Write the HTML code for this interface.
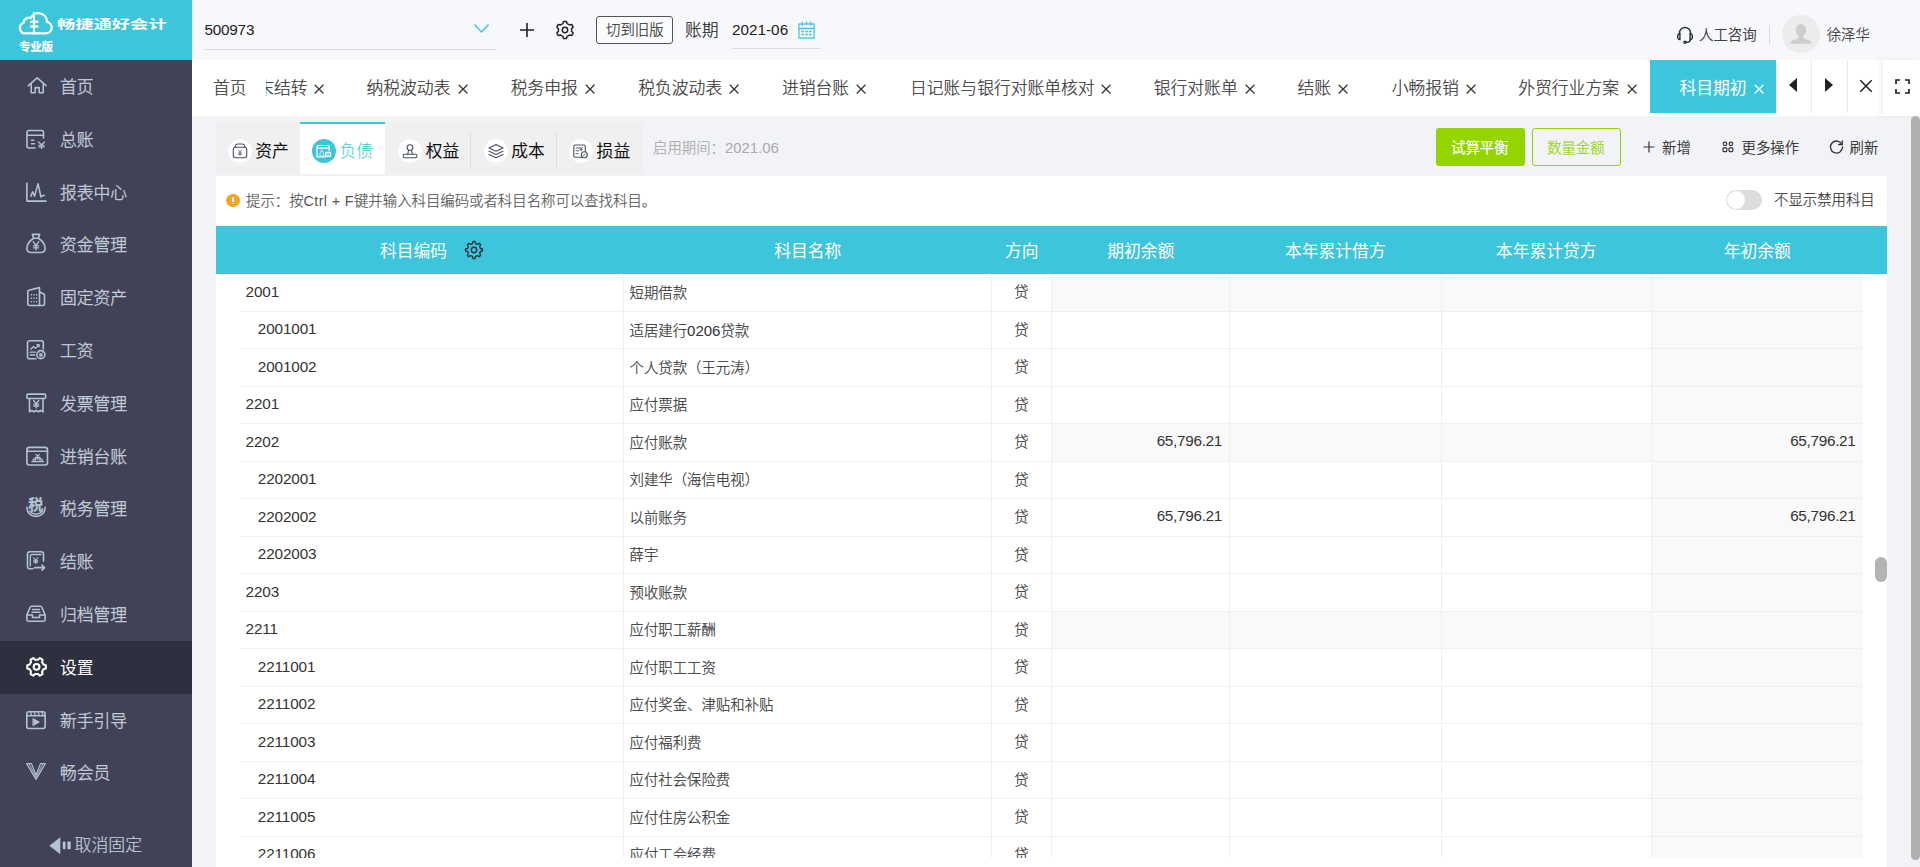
<!DOCTYPE html><html lang="zh-CN"><head><meta charset="utf-8"><title>科目期初</title><style>
*{box-sizing:border-box;margin:0;padding:0}
html,body{width:1920px;height:867px;overflow:hidden}
body{position:relative;background:#f2f3f6;font-family:"Liberation Sans", "Noto Sans CJK SC", sans-serif;color:#333;font-size:14.4px;font-weight:300}
.abs{position:absolute}
#top{position:absolute;left:192px;top:0;width:1728px;height:60px;background:#f7f8fc}
#logo{position:absolute;left:0;top:0;width:192px;height:60px;background:#3dc5dc}
#side{position:absolute;left:0;top:60px;width:192px;height:807px;background:#414257}
.nav{position:absolute;left:0;width:192px;height:52.8px;color:#c5cfdc;font-size:16.8px;line-height:56.6px;padding-left:60px;white-space:nowrap;-webkit-text-stroke:.35px}
.nav.on{background:#2e303f;color:#fff;font-weight:400;-webkit-text-stroke:0}
.nav svg{position:absolute;left:24px;top:13px;width:27px;height:27px;fill:none;stroke:#b4c3d3;stroke-width:1.6;stroke-linecap:round;stroke-linejoin:round}
.nav.on svg{stroke:#fff}
#tabs{position:absolute;left:192px;top:60px;width:1728px;height:55.5px;background:#fff}
.tab{position:absolute;top:60px;height:53px;line-height:54px;font-size:16.8px;color:#333;white-space:nowrap}
.tab i{position:absolute;top:0;font-style:normal}
.x{position:absolute;top:84.300px;width:10.200px;height:10.200px}
.x svg{display:block;width:100%;height:100%;stroke:#333;stroke-width:1.200;fill:none}
.t{position:absolute;white-space:nowrap;line-height:1;-webkit-text-stroke:.2px}
.n{-webkit-text-stroke:0}
</style></head><body>
<div id="logo">
<svg class="abs" style="left:16.200px;top:10px" width="37.500" height="25" viewBox="0 0 36 24" fill="none" stroke="#fff" stroke-width="2.2" stroke-linecap="round" stroke-linejoin="round"><path d="M9 22.5h19.5a5.6 5.6 0 0 0 1.2-11.1A8.2 8.2 0 0 0 14.2 7.6 5.2 5.2 0 0 0 7.3 12.2 5.3 5.3 0 0 0 9 22.5z"/><path d="M17.2 2.5v20" stroke-width="1.8"/><path d="M14.5 11.2h6M14.5 15.8h6" stroke-width="2.4"/></svg>
<div class="t n" style="left:56.800px;top:19.300px;font-size:12.200px;font-weight:700;color:#fff;transform:scaleX(1.500);transform-origin:0 0;letter-spacing:0">畅捷通好会计</div>
<div class="t" style="left:19px;top:42.2px;font-size:11.5px;font-weight:700;color:#fff;letter-spacing:-0.3px">专业版</div>
</div>
<div id="side"></div>
<div class="nav" style="top:60.0px"><svg viewBox="0 0 27 27"><path d="M4.3 12.7L13.2 4.8l8.9 7.9"/><path d="M7.200 11.200V19.800h4v-5.200h4v5.200h4V11.200"/></svg>首页</div>
<div class="nav" style="top:112.8px"><svg viewBox="0 0 27 27"><path d="M19.500 12V6.500a2 2 0 0 0-2-2H5a2 2 0 0 0-2 2V20a2 2 0 0 0 2 2h6"/><path d="M3 9.300h16.500"/><path d="M7.500 14.200h2.200M7.500 17.800h3"/><path d="M14.50 16.00L17.50 18.73L20.50 16.00M17.50 18.73V22.50M14.80 19.25H20.20M14.80 20.81H20.20" stroke-width="1.2"/></svg>总账</div>
<div class="nav" style="top:165.6px"><svg viewBox="0 0 27 27"><path d="M2.900 4.200V22.100H22"/><path d="M6.800 17.300l1.800-4.600 1.900 4.600L14.100 4.800l2.800 13.200 2-1.600h1.500" stroke-width="1.500"/></svg>报表中心</div>
<div class="nav" style="top:218.4px"><svg viewBox="0 0 27 27"><path d="M8.300 3.400h7.400l-1.400 3.800H9.700z"/><path d="M9.700 7.200C5 10 2.900 14 2.900 17.500c0 3 2.100 4 4.600 4h9c2.500 0 4.600-1 4.600-4 0-3.500-2.100-7.500-6.800-10.300"/><path d="M9.20 10.80L12.00 14.24L14.80 10.80M12.00 14.24V19.00M9.48 14.90H14.52M9.48 16.87H14.52" stroke-width="1.3"/></svg>资金管理</div>
<div class="nav" style="top:271.2px"><svg viewBox="0 0 27 27"><path d="M3.800 20V7.700a1.500 1.500 0 0 1 1-1.400l10.700-2.700v17.900H5.300A1.500 1.500 0 0 1 3.800 20z"/><path d="M15.500 8l4.300 2a1.200 1.200 0 0 1 .7 1.100V20a1.500 1.500 0 0 1-1.500 1.500h-3.500"/><path d="M6.800 10.800h1.300M9.400 10.800h1.300M12 10.800h1.300M6.800 14.200h1.300M9.400 14.200h1.300M12 14.200h1.300M6.800 17.600h1.300M9.400 17.600h1.300M12 17.600h1.300" stroke-width="1.400" stroke-linecap="butt"/></svg>固定资产</div>
<div class="nav" style="top:324.0px"><svg viewBox="0 0 27 27"><path d="M19.300 12V5.800a2 2 0 0 0-2-2H5.500a2 2 0 0 0-2 2v13.900a2 2 0 0 0 2 2H12"/><path d="M6.800 12.300l2.700-2.800 1.900 1.900 3.700-3.700M13 7.700h2.100v2.100" stroke-width="1.300"/><path d="M6.300 15.200h5M6.300 18h4.500" stroke-width="1.300"/><circle cx="16.900" cy="17.600" r="4"/><path d="M15.30 15.60L16.90 17.36L18.50 15.60M16.90 17.36V19.80M15.46 17.70H18.34M15.46 18.71H18.34" stroke-width="1"/></svg>工资</div>
<div class="nav" style="top:376.8px"><svg viewBox="0 0 27 27"><rect x="2.900" y="4.100" width="18.700" height="4.400" rx="1"/><path d="M5.500 8.500v13.300l2.250-1.300 2.250 1.300 2.250-1.300 2.250 1.300 2.250-1.300 2.250 1.300V8.500"/><path d="M9.65 10.50L12.25 13.61L14.85 10.50M12.25 13.61V17.90M9.91 14.20H14.59M9.91 15.98H14.59" stroke-width="1.3"/></svg>发票管理</div>
<div class="nav" style="top:429.6px"><svg viewBox="0 0 27 27"><rect x="2.900" y="4.400" width="20.600" height="17.600" rx="2.500"/><path d="M2.900 8.300h20.600"/><path d="M7.800 18.600h11.800M11.300 18.600v-4.300M16 18.600v-4.300M9.300 16h8.800M9.300 18.600v-2.600M18.100 18.600v-2.600M11.300 14.300h4.700M12 11.300l1.700 1.700 1.700-1.700M13.700 13v2.800" stroke-width="1.200"/></svg>进销台账</div>
<div class="nav" style="top:482.4px"><svg viewBox="0 0 27 27"><path d="M2.900 12.300C2.900 18 7 21.400 12 21.400s9.100-3.400 9.100-9.100"/><path d="M5.800 16.200c1.400 1.900 3.600 2.900 6.200 2.900s4.800-1 6.200-2.900" stroke-width="1.300"/></svg><span class="t" style="left:28.3px;top:14.200px;font-size:15px;font-weight:700;color:#b4c3d3">税</span>税务管理</div>
<div class="nav" style="top:535.2px"><svg viewBox="0 0 27 27"><path d="M19.500 13V6a2.300 2.300 0 0 0-2.300-2.300H5.800A2.300 2.300 0 0 0 3.500 6v12.500a2.300 2.300 0 0 0 2.300 2.300H9"/><path d="M6.300 18V8.500a2 2 0 0 1 2-2H17" stroke-width="1.300"/><path d="M9.50 9.80L11.70 12.24L13.90 9.80M11.70 12.24V15.60M9.72 12.70H13.68M9.72 14.09H13.68" stroke-width="1.1"/><path d="M10.500 19.600h10M18 17.100l2.500 2.500-2.500 2.500"/></svg>结账</div>
<div class="nav" style="top:588.0px"><svg viewBox="0 0 27 27"><path d="M2.900 14L6 6.500a1.800 1.800 0 0 1 1.700-1.200h8.600A1.800 1.800 0 0 1 18 6.500l3.100 7.500v4.500a1.800 1.800 0 0 1-1.800 1.800H4.700a1.800 1.800 0 0 1-1.800-1.800z"/><path d="M2.900 14h5.600v2.500h7V14h5.600"/><path d="M8.500 8.500h7M8 11.300h8" stroke-width="1.400"/></svg>归档管理</div>
<div class="nav on" style="top:640.8px"><svg viewBox="0 0 27 27"><path d="M19.47 10.52 L21.82 11.28 L21.82 14.42 L19.47 15.18 L18.03 17.68 L18.54 20.09 L15.83 21.66 L13.99 20.01 L11.11 20.01 L9.27 21.66 L6.56 20.09 L7.07 17.68 L5.63 15.18 L3.28 14.42 L3.28 11.28 L5.63 10.52 L7.07 8.02 L6.56 5.61 L9.27 4.04 L11.11 5.69 L13.99 5.69 L15.83 4.04 L18.54 5.61 L18.03 8.02Z" stroke-width="2.100"/><circle cx="12.550" cy="12.850" r="2.900" stroke-width="2.100"/></svg>设置</div>
<div class="nav" style="top:693.6px"><svg viewBox="0 0 27 27"><rect x="2.800" y="4.800" width="18.300" height="16.700" rx="2"/><path d="M2.800 8.800h18.300"/><path d="M6.500 5.200l1.300 3.200M10.300 5.200l1.300 3.200M14.100 5.200l1.300 3.200M17.900 5.200l1.300 3.200" stroke-width="1.200"/><path d="M9.300 11.700l6 3.400-6 3.400z" fill="#b4c3d3" stroke-width="1"/></svg>新手引导</div>
<div class="nav" style="top:746.4px"><svg viewBox="0 0 27 27"><path d="M2.700 4.600h4.800L12 16.200l4.500-11.600h4.800L12 20.400z" stroke-width="1.200"/><path d="M5.200 4.800L12 18.200 18.800 4.800" stroke-width=".9"/></svg>畅会员</div>
<div class="t" style="left:74.500px;top:838.300px;font-size:16.900px;color:#c5cfdc">取消固定</div>
<svg class="abs" style="left:48.200px;top:836.300px" width="25" height="20" viewBox="0 0 25 20"><path d="M1.300 9.700L12.300 1.200v17z" fill="#b4c3d3"/><rect x="14.800" y="5.600" width="2.700" height="7.700" rx=".7" fill="#b4c3d3"/><rect x="19.400" y="5.600" width="3.300" height="7.700" rx=".7" fill="#b4c3d3"/></svg>
<div id="top"></div>
<div class="t n" style="left:204.400px;top:22.100px;font-size:15.300px;letter-spacing:-.2px;color:#222">500973</div>
<div class="abs" style="left:204px;top:49px;width:292px;height:1px;background:#dcdde1"></div>
<svg class="abs" style="left:473px;top:23px" width="17" height="11" viewBox="0 0 17 11" fill="none" stroke="#3dc5dc" stroke-width="1.500"><path d="M1.500 1.500l7 7.500 7-7.500"/></svg>
<svg class="abs" style="left:519px;top:22px" width="16" height="16" viewBox="0 0 16 16" fill="none" stroke="#222" stroke-width="1.600"><path d="M8 1v14M1 8h14"/></svg>
<svg class="abs" style="left:554px;top:19px" width="22" height="22" viewBox="0 0 22 22" fill="none" stroke="#222" stroke-width="1.500" stroke-linejoin="round"><path d="M8.86 4.65 L9.55 2.42 L12.45 2.42 L13.14 4.65 L15.43 5.97 L17.70 5.45 L19.15 7.97 L17.57 9.68 L17.57 12.32 L19.15 14.03 L17.70 16.55 L15.43 16.03 L13.14 17.35 L12.45 19.58 L9.55 19.58 L8.86 17.35 L6.57 16.03 L4.30 16.55 L2.85 14.03 L4.43 12.32 L4.43 9.68 L2.85 7.97 L4.30 5.45 L6.57 5.97Z"/><circle cx="11" cy="11" r="2.700"/></svg>
<div class="abs" style="left:596px;top:16px;width:77px;height:28px;border:1px solid #555;border-radius:3px;background:#fafbfd"></div>
<div class="t" style="left:606px;top:22.500px;font-size:14.400px;color:#333">切到旧版</div>
<div class="t" style="left:685px;top:23.300px;font-size:16.800px;color:#222">账期</div>
<div class="t n" style="left:732px;top:21.900px;font-size:15.300px;color:#222">2021-06</div>
<div class="abs" style="left:731.500px;top:48px;width:89px;height:1px;background:#dcdde1"></div>
<svg class="abs" style="left:798px;top:21px" width="17" height="18" viewBox="0 0 18 18" preserveAspectRatio="none" fill="none" stroke="#3dc5dc" stroke-width="1.300"><rect x="1" y="3" width="16" height="14"/><path d="M1 7.500h16M4.500 .500v4.500M13.500 .500v4.500M9 .500v3"/><path d="M3.600 10.500h2.800M7.600 10.500h2.800M11.600 10.500h2.800M3.600 13.500h2.800M7.600 13.500h2.800M11.600 13.500h2.800" stroke-width="1.300"/></svg>
<svg class="abs" style="left:1675px;top:25px" width="20" height="20" viewBox="0 0 20 20" fill="none" stroke="#2a2e3a" stroke-width="1.400" stroke-linecap="round"><path d="M4.500 9V8a5.500 5.500 0 0 1 11 0v1"/><path d="M4.900 8.700a2.100 2.100 0 0 0-2.200 2.100v1.600a2.100 2.100 0 0 0 2.200 2.100zM15.100 8.700a2.100 2.100 0 0 1 2.200 2.100v1.600a2.100 2.100 0 0 1-2.200 2.100z"/><path d="M15.500 14.500c0 1.700-1.800 2.700-4.300 2.800"/><circle cx="10" cy="17.300" r="1.100"/></svg>
<div class="t" style="left:1699px;top:27.500px;font-size:14.400px;color:#222">人工咨询</div>
<div class="abs" style="left:1769px;top:25px;width:1px;height:19px;background:#d9dadf"></div>
<div class="abs" style="left:1782px;top:15px;width:38px;height:38px;border-radius:50%;background:#ececec;overflow:hidden"><svg width="38" height="38" viewBox="0 0 38 38"><ellipse cx="19" cy="15" rx="5.300" ry="5.900" fill="#cdcdcd"/><path d="M8.600 28.800c0-1.600.6-2.600 2.100-3.200l5.300-2.200c.7-.3.900-1 .7-1.800l-.5-2h5.600l-.5 2c-.2.800 0 1.500.7 1.800l5.300 2.200c1.500.6 2.100 1.600 2.100 3.200z" fill="#cdcdcd"/></svg></div>
<div class="t" style="left:1826.700px;top:27.600px;font-size:14.400px;color:#333">徐泽华</div>
<div id="tabs"></div>
<div class="abs" style="left:266.400px;top:60px;width:48.600px;height:53px;overflow:hidden"><div class="t" style="right:7.500px;top:21.200px;font-size:16.800px;color:#333">期末结转</div></div>
<div class="x" style="left:314px"><svg viewBox="0 0 10 10"><path d="M.7.7l8.600 8.600M9.300.7L.7 9.300"/></svg></div>
<div class="t" style="left:213.00px;top:81.200px;font-size:16.800px;color:#333">首页</div>
<div class="t" style="left:366.50px;top:81.200px;font-size:16.800px;color:#333">纳税波动表</div>
<div class="x" style="left:457.50px"><svg viewBox="0 0 10 10"><path d="M.7.7l8.600 8.600M9.300.7L.7 9.300"/></svg></div>
<div class="t" style="left:510.75px;top:81.200px;font-size:16.800px;color:#333">税务申报</div>
<div class="x" style="left:585.00px"><svg viewBox="0 0 10 10"><path d="M.7.7l8.600 8.600M9.300.7L.7 9.300"/></svg></div>
<div class="t" style="left:638.25px;top:81.200px;font-size:16.800px;color:#333">税负波动表</div>
<div class="x" style="left:729.00px"><svg viewBox="0 0 10 10"><path d="M.7.7l8.600 8.600M9.300.7L.7 9.300"/></svg></div>
<div class="t" style="left:782.00px;top:81.200px;font-size:16.800px;color:#333">进销台账</div>
<div class="x" style="left:855.75px"><svg viewBox="0 0 10 10"><path d="M.7.7l8.600 8.600M9.300.7L.7 9.300"/></svg></div>
<div class="t" style="left:910.00px;top:81.200px;font-size:16.800px;color:#333">日记账与银行对账单核对</div>
<div class="x" style="left:1100.75px"><svg viewBox="0 0 10 10"><path d="M.7.7l8.600 8.600M9.300.7L.7 9.300"/></svg></div>
<div class="t" style="left:1153.75px;top:81.200px;font-size:16.800px;color:#333">银行对账单</div>
<div class="x" style="left:1244.50px"><svg viewBox="0 0 10 10"><path d="M.7.7l8.600 8.600M9.300.7L.7 9.300"/></svg></div>
<div class="t" style="left:1297.50px;top:81.200px;font-size:16.800px;color:#333">结账</div>
<div class="x" style="left:1338.00px"><svg viewBox="0 0 10 10"><path d="M.7.7l8.600 8.600M9.300.7L.7 9.300"/></svg></div>
<div class="t" style="left:1391.75px;top:81.200px;font-size:16.800px;color:#333">小畅报销</div>
<div class="x" style="left:1465.50px"><svg viewBox="0 0 10 10"><path d="M.7.7l8.600 8.600M9.300.7L.7 9.300"/></svg></div>
<div class="t" style="left:1518.25px;top:81.200px;font-size:16.800px;color:#333">外贸行业方案</div>
<div class="x" style="left:1626.50px"><svg viewBox="0 0 10 10"><path d="M.7.7l8.600 8.600M9.300.7L.7 9.300"/></svg></div>
<div class="abs" style="left:1650px;top:60px;width:126px;height:53px;background:#3dc5dc"></div>
<div class="t n" style="left:1679.500px;top:81.200px;font-size:16.800px;font-weight:400;color:#fff">科目期初</div>
<div class="x" style="left:1753.700px"><svg viewBox="0 0 10 10" style="stroke:#fff"><path d="M.7.7l8.600 8.600M9.300.7L.7 9.300"/></svg></div>
<div class="abs" style="left:1776px;top:60px;width:107px;height:53px;background:#fff"></div>
<div class="abs" style="left:1811px;top:60px;width:1px;height:53px;background:#e9e9e9"></div>
<div class="abs" style="left:1847px;top:60px;width:1px;height:53px;background:#e9e9e9"></div>
<svg class="abs" style="left:1788px;top:77px" width="10" height="16" viewBox="0 0 10 16"><path d="M9 1v14L1 8z" fill="#222"/></svg>
<svg class="abs" style="left:1824px;top:77px" width="10" height="16" viewBox="0 0 10 16"><path d="M1 1v14l8-7z" fill="#222"/></svg>
<svg class="abs" style="left:1859px;top:79px" width="14" height="14" viewBox="0 0 14 14" fill="none" stroke="#222" stroke-width="1.500"><path d="M1.300 1.300l11.400 11.400M12.700 1.300L1.300 12.700"/></svg>
<div class="abs" style="left:1883px;top:60px;width:37px;height:55.500px;background:#fff;box-shadow:-3px 0 5px rgba(0,0,0,.06)"></div>
<svg class="abs" style="left:1895px;top:79px" width="15" height="15" viewBox="0 0 15 15" fill="none" stroke="#222" stroke-width="1.700"><path d="M1 5V1h4M10 1h4v4M14 10v4h-4M5 14H1v-4"/></svg>
<div class="abs" style="left:216px;top:122px;width:426px;height:52px;background:#f0f0f0"></div>
<div class="abs" style="left:300px;top:122px;width:84.500px;height:52px;background:#fff;border-top:2px solid #3dc5dc"></div>
<div class="abs" style="left:470px;top:132px;width:1px;height:36px;background:#dedede"></div>
<div class="abs" style="left:556px;top:132px;width:1px;height:36px;background:#dedede"></div>
<svg class="abs" style="left:227.9px;top:139.0px" width="24" height="24" viewBox="0 0 24 24"><circle cx="12" cy="12" r="11.8" fill="#fff"/><g fill="none" stroke="#4a5160" stroke-width="1.100" stroke-linecap="round" stroke-linejoin="round"><rect x="5.300" y="8.200" width="13.400" height="10.600" rx="2.200"/><path d="M7.200 8.200c0-2 1.200-3.200 2.800-3.200h4c1.600 0 2.800 1.200 2.800 3.200"/><path d="M10.700 11.700l1.300 1.600 1.300-1.600M12 13.300v2.600M10.600 14.100h2.800M10.600 15.300h2.800" stroke-width=".8"/></g></svg>
<svg class="abs" style="left:312.0px;top:139.0px" width="24" height="24" viewBox="0 0 24 24"><circle cx="12" cy="12" r="12" fill="#3dc5dc"/><g fill="none" stroke="#fff" stroke-width="1.200" stroke-linecap="round" stroke-linejoin="round"><path d="M17.200 11.500V7.800A1.300 1.300 0 0 0 15.900 6.500H6.300A1.300 1.300 0 0 0 5 7.800v9.700"/><path d="M5 9.200h12.200"/><path d="M9.800 11.300c-1.200 1.800-2 3.300-2 4.300 0 .9.800 1.500 2 1.500s2-.6 2-1.500c0-1-.8-2.500-2-4.300z" stroke-width=".9"/><rect x="13.600" y="13.300" width="5" height="4.200" rx="1" fill="#fff" fill-opacity=".35"/><path d="M4.500 17.800h9"/></g></svg>
<svg class="abs" style="left:397.7px;top:139.0px" width="24" height="24" viewBox="0 0 24 24"><circle cx="12" cy="12" r="11.8" fill="#fff"/><g fill="none" stroke="#4a5160" stroke-width="1.100" stroke-linecap="round" stroke-linejoin="round"><circle cx="12" cy="8.600" r="2.900"/><path d="M10.600 11.200l-.8 4M13.400 11.200l.8 4"/><rect x="5.200" y="15.200" width="13.600" height="3.600" rx="1.200"/></g></svg>
<svg class="abs" style="left:483.8px;top:139.0px" width="24" height="24" viewBox="0 0 24 24"><circle cx="12" cy="12" r="11.8" fill="#fff"/><g fill="none" stroke="#4a5160" stroke-width="1.100" stroke-linecap="round" stroke-linejoin="round"><path d="M12 5.500l7 3.400-7 3.400-7-3.400z"/><path d="M5 12.200l7 3.400 7-3.400"/><path d="M5 15.400l7 3.400 7-3.400"/></g></svg>
<svg class="abs" style="left:568.8px;top:139.0px" width="24" height="24" viewBox="0 0 24 24"><circle cx="12" cy="12" r="11.8" fill="#fff"/><g fill="none" stroke="#4a5160" stroke-width="1.100" stroke-linecap="round" stroke-linejoin="round"><rect x="4.800" y="6" width="11.500" height="12.200" rx="1.200"/><path d="M7 9h3.500M7 11.800h2.800M7 14.600h2M11 8.300l1.200 1.400 1.200-1.400M12.200 9.700v2M11.200 10.400h2" stroke-width=".9"/><circle cx="15.300" cy="15.700" r="3" fill="#fff"/><path d="M14 15.700l.9.900 1.600-1.700" stroke-width=".9"/></g></svg>
<div class="t n" style="left:255.3px;top:143.500px;font-size:16.800px;font-weight:400;color:#111">资产</div>
<div class="t n" style="left:339.5px;top:143.500px;font-size:16.800px;font-weight:300;color:#3dc5dc">负债</div>
<div class="t n" style="left:425.8px;top:143.500px;font-size:16.800px;font-weight:400;color:#111">权益</div>
<div class="t n" style="left:511.3px;top:143.500px;font-size:16.800px;font-weight:400;color:#111">成本</div>
<div class="t n" style="left:596.6px;top:143.500px;font-size:16.800px;font-weight:400;color:#111">损益</div>
<div class="t" style="left:653px;top:140.500px;font-size:14.400px;color:#aaa">启用期间：<span class="n" style="font-size:14.900px">2021.06</span></div>
<div class="abs" style="left:1436px;top:128px;width:89px;height:38px;border-radius:3px;background:#94d500"></div>
<div class="t" style="left:1451px;top:140.600px;font-size:14.400px;font-weight:400;color:#fff">试算平衡</div>
<div class="abs" style="left:1532px;top:128px;width:89px;height:38px;border-radius:3px;border:1px solid #94d500"></div>
<div class="t" style="left:1547px;top:140.600px;font-size:14.400px;color:#94d500">数量金额</div>
<svg class="abs" style="left:1643px;top:141px" width="12" height="12" viewBox="0 0 12 12" fill="none" stroke="#333" stroke-width="1.200"><path d="M6 .5v11M.5 6h11"/></svg>
<div class="t" style="left:1662px;top:140.700px;font-size:14.400px;color:#222">新增</div>
<svg class="abs" style="left:1722px;top:141px" width="12" height="12" viewBox="0 0 12 12" fill="none" stroke="#333" stroke-width="1.200"><rect x="1" y="6.800" width="3.800" height="3.800" rx=".8"/><rect x="7" y="6.800" width="3.800" height="3.800" rx=".8"/><rect x="1.300" y="1.200" width="3.400" height="3.400" rx="1.500"/><rect x="7.200" y="1.200" width="3.400" height="3.400" rx="1.500"/></svg>
<div class="t" style="left:1741.500px;top:140.700px;font-size:14.400px;color:#222">更多操作</div>
<svg class="abs" style="left:1829px;top:139px" width="15" height="15" viewBox="0 0 15 15" fill="none" stroke="#333" stroke-width="1.300" stroke-linecap="round"><path d="M12.800 5.200A6 6 0 1 0 13.500 8"/><path d="M13.300 1.800v3.700h-3.700"/></svg>
<div class="t" style="left:1849.500px;top:140.700px;font-size:14.400px;color:#222">刷新</div>
<div class="abs" style="left:216px;top:175.500px;width:1670.500px;height:700px;background:#fff"></div>
<div class="abs" style="left:226.300px;top:193.800px;width:13.600px;height:13.600px;border-radius:50%;background:#f5a425"></div>
<div class="abs" style="left:232.200px;top:196.800px;width:1.600px;height:5px;background:#fff"></div><div class="abs" style="left:232.200px;top:202.800px;width:1.600px;height:1.600px;background:#fff"></div>
<div class="t" style="left:246px;top:193.900px;font-size:14.400px;color:#555">提示：按<span class="n" style="letter-spacing:.35px">Ctrl + F</span>键并输入科目编码或者科目名称可以查找科目。</div>
<div class="abs" style="left:1726px;top:190px;width:36px;height:20px;border-radius:10px;background:#dcdcdc"></div>
<div class="abs" style="left:1727px;top:191px;width:18px;height:18px;border-radius:50%;background:#fff"></div>
<div class="t" style="left:1774px;top:192.500px;font-size:14.400px;color:#333">不显示禁用科目</div>
<div class="abs" style="left:216px;top:226px;width:1670.500px;height:47.750px;background:#3dc5dc"></div>
<div class="t n" style="left:380.00px;top:243.700px;font-size:16.800px;font-weight:400;color:#fff">科目编码</div>
<div class="t n" style="left:774.15px;top:243.700px;font-size:16.800px;font-weight:400;color:#fff">科目名称</div>
<div class="t n" style="left:1004.95px;top:243.700px;font-size:16.800px;font-weight:400;color:#fff">方向</div>
<div class="t n" style="left:1107.15px;top:243.700px;font-size:16.800px;font-weight:400;color:#fff">期初余额</div>
<div class="t n" style="left:1284.97px;top:243.700px;font-size:16.800px;font-weight:400;color:#fff">本年累计借方</div>
<div class="t n" style="left:1495.85px;top:243.700px;font-size:16.800px;font-weight:400;color:#fff">本年累计贷方</div>
<div class="t n" style="left:1723.65px;top:243.700px;font-size:16.800px;font-weight:400;color:#fff">年初余额</div>
<svg class="abs" style="left:463px;top:239px" width="22" height="22" viewBox="0 0 22 22" fill="none" stroke="#2d3340" stroke-width="1.400" stroke-linejoin="round"><path d="M9.46 4.58 L10.00 2.56 L12.00 2.56 L12.54 4.58 L14.45 5.37 L16.26 4.32 L17.68 5.74 L16.63 7.55 L17.42 9.46 L19.44 10.00 L19.44 12.00 L17.42 12.54 L16.63 14.45 L17.68 16.26 L16.26 17.68 L14.45 16.63 L12.54 17.42 L12.00 19.44 L10.00 19.44 L9.46 17.42 L7.55 16.63 L5.74 17.68 L4.32 16.26 L5.37 14.45 L4.58 12.54 L2.56 12.00 L2.56 10.00 L4.58 9.46 L5.37 7.55 L4.32 5.74 L5.74 4.32 L7.55 5.37Z"/><circle cx="11" cy="11" r="2.700"/></svg>
<div class="abs" id="tb" style="left:240px;top:273.750px;width:1622.500px;height:583.750px;overflow:hidden">
<div class="abs" style="left:0;top:0.00px;width:1622.500px;height:37.500px">
<div class="abs" style="left:812px;top:0;width:810.500px;height:37.500px;background:#f9f9f9"></div>
<div class="t n" style="left:5.6px;top:10px;font-size:15.300px;letter-spacing:-.12px;color:#333">2001</div>
<div class="t" style="left:389.500px;top:12px;font-size:14.400px;color:#333">短期借款</div>
<div class="t" style="left:774.300px;top:11.500px;font-size:14.400px;color:#333">贷</div>
</div>
<div class="abs" style="left:0;top:37.50px;width:1622.500px;height:37.500px">
<div class="abs" style="left:1412px;top:0;width:210.500px;height:37.500px;background:#f9f9f9"></div>
<div class="t n" style="left:17.8px;top:10px;font-size:15.300px;letter-spacing:-.12px;color:#333">2001001</div>
<div class="t" style="left:389.500px;top:12px;font-size:14.400px;color:#333">适居建行<span class="n" style="font-size:15px">0206</span>贷款</div>
<div class="t" style="left:774.300px;top:11.500px;font-size:14.400px;color:#333">贷</div>
</div>
<div class="abs" style="left:0;top:75.00px;width:1622.500px;height:37.500px">
<div class="abs" style="left:1412px;top:0;width:210.500px;height:37.500px;background:#f9f9f9"></div>
<div class="t n" style="left:17.8px;top:10px;font-size:15.300px;letter-spacing:-.12px;color:#333">2001002</div>
<div class="t" style="left:389.500px;top:12px;font-size:14.400px;color:#333">个人贷款（王元涛）</div>
<div class="t" style="left:774.300px;top:11.500px;font-size:14.400px;color:#333">贷</div>
</div>
<div class="abs" style="left:0;top:112.50px;width:1622.500px;height:37.500px">
<div class="abs" style="left:1412px;top:0;width:210.500px;height:37.500px;background:#f9f9f9"></div>
<div class="t n" style="left:5.6px;top:10px;font-size:15.300px;letter-spacing:-.12px;color:#333">2201</div>
<div class="t" style="left:389.500px;top:12px;font-size:14.400px;color:#333">应付票据</div>
<div class="t" style="left:774.300px;top:11.500px;font-size:14.400px;color:#333">贷</div>
</div>
<div class="abs" style="left:0;top:150.00px;width:1622.500px;height:37.500px">
<div class="abs" style="left:812px;top:0;width:810.500px;height:37.500px;background:#f9f9f9"></div>
<div class="t n" style="left:5.6px;top:10px;font-size:15.300px;letter-spacing:-.12px;color:#333">2202</div>
<div class="t" style="left:389.500px;top:12px;font-size:14.400px;color:#333">应付账款</div>
<div class="t" style="left:774.300px;top:11.500px;font-size:14.400px;color:#333">贷</div>
<div class="t n" style="right:640.500px;top:9.500px;font-size:15.300px;letter-spacing:-.3px;color:#333">65,796.21</div>
<div class="t n" style="right:7px;top:9.500px;font-size:15.300px;letter-spacing:-.3px;color:#333">65,796.21</div>
</div>
<div class="abs" style="left:0;top:187.50px;width:1622.500px;height:37.500px">
<div class="abs" style="left:1412px;top:0;width:210.500px;height:37.500px;background:#f9f9f9"></div>
<div class="t n" style="left:17.8px;top:10px;font-size:15.300px;letter-spacing:-.12px;color:#333">2202001</div>
<div class="t" style="left:389.500px;top:12px;font-size:14.400px;color:#333">刘建华（海信电视）</div>
<div class="t" style="left:774.300px;top:11.500px;font-size:14.400px;color:#333">贷</div>
</div>
<div class="abs" style="left:0;top:225.00px;width:1622.500px;height:37.500px">
<div class="abs" style="left:1412px;top:0;width:210.500px;height:37.500px;background:#f9f9f9"></div>
<div class="t n" style="left:17.8px;top:10px;font-size:15.300px;letter-spacing:-.12px;color:#333">2202002</div>
<div class="t" style="left:389.500px;top:12px;font-size:14.400px;color:#333">以前账务</div>
<div class="t" style="left:774.300px;top:11.500px;font-size:14.400px;color:#333">贷</div>
<div class="t n" style="right:640.500px;top:9.500px;font-size:15.300px;letter-spacing:-.3px;color:#333">65,796.21</div>
<div class="t n" style="right:7px;top:9.500px;font-size:15.300px;letter-spacing:-.3px;color:#333">65,796.21</div>
</div>
<div class="abs" style="left:0;top:262.50px;width:1622.500px;height:37.500px">
<div class="abs" style="left:1412px;top:0;width:210.500px;height:37.500px;background:#f9f9f9"></div>
<div class="t n" style="left:17.8px;top:10px;font-size:15.300px;letter-spacing:-.12px;color:#333">2202003</div>
<div class="t" style="left:389.500px;top:12px;font-size:14.400px;color:#333">薛宇</div>
<div class="t" style="left:774.300px;top:11.500px;font-size:14.400px;color:#333">贷</div>
</div>
<div class="abs" style="left:0;top:300.00px;width:1622.500px;height:37.500px">
<div class="abs" style="left:1412px;top:0;width:210.500px;height:37.500px;background:#f9f9f9"></div>
<div class="t n" style="left:5.6px;top:10px;font-size:15.300px;letter-spacing:-.12px;color:#333">2203</div>
<div class="t" style="left:389.500px;top:12px;font-size:14.400px;color:#333">预收账款</div>
<div class="t" style="left:774.300px;top:11.500px;font-size:14.400px;color:#333">贷</div>
</div>
<div class="abs" style="left:0;top:337.50px;width:1622.500px;height:37.500px">
<div class="abs" style="left:812px;top:0;width:810.500px;height:37.500px;background:#f9f9f9"></div>
<div class="t n" style="left:5.6px;top:10px;font-size:15.300px;letter-spacing:-.12px;color:#333">2211</div>
<div class="t" style="left:389.500px;top:12px;font-size:14.400px;color:#333">应付职工薪酬</div>
<div class="t" style="left:774.300px;top:11.500px;font-size:14.400px;color:#333">贷</div>
</div>
<div class="abs" style="left:0;top:375.00px;width:1622.500px;height:37.500px">
<div class="abs" style="left:1412px;top:0;width:210.500px;height:37.500px;background:#f9f9f9"></div>
<div class="t n" style="left:17.8px;top:10px;font-size:15.300px;letter-spacing:-.12px;color:#333">2211001</div>
<div class="t" style="left:389.500px;top:12px;font-size:14.400px;color:#333">应付职工工资</div>
<div class="t" style="left:774.300px;top:11.500px;font-size:14.400px;color:#333">贷</div>
</div>
<div class="abs" style="left:0;top:412.50px;width:1622.500px;height:37.500px">
<div class="abs" style="left:1412px;top:0;width:210.500px;height:37.500px;background:#f9f9f9"></div>
<div class="t n" style="left:17.8px;top:10px;font-size:15.300px;letter-spacing:-.12px;color:#333">2211002</div>
<div class="t" style="left:389.500px;top:12px;font-size:14.400px;color:#333">应付奖金、津贴和补贴</div>
<div class="t" style="left:774.300px;top:11.500px;font-size:14.400px;color:#333">贷</div>
</div>
<div class="abs" style="left:0;top:450.00px;width:1622.500px;height:37.500px">
<div class="abs" style="left:1412px;top:0;width:210.500px;height:37.500px;background:#f9f9f9"></div>
<div class="t n" style="left:17.8px;top:10px;font-size:15.300px;letter-spacing:-.12px;color:#333">2211003</div>
<div class="t" style="left:389.500px;top:12px;font-size:14.400px;color:#333">应付福利费</div>
<div class="t" style="left:774.300px;top:11.500px;font-size:14.400px;color:#333">贷</div>
</div>
<div class="abs" style="left:0;top:487.50px;width:1622.500px;height:37.500px">
<div class="abs" style="left:1412px;top:0;width:210.500px;height:37.500px;background:#f9f9f9"></div>
<div class="t n" style="left:17.8px;top:10px;font-size:15.300px;letter-spacing:-.12px;color:#333">2211004</div>
<div class="t" style="left:389.500px;top:12px;font-size:14.400px;color:#333">应付社会保险费</div>
<div class="t" style="left:774.300px;top:11.500px;font-size:14.400px;color:#333">贷</div>
</div>
<div class="abs" style="left:0;top:525.00px;width:1622.500px;height:37.500px">
<div class="abs" style="left:1412px;top:0;width:210.500px;height:37.500px;background:#f9f9f9"></div>
<div class="t n" style="left:17.8px;top:10px;font-size:15.300px;letter-spacing:-.12px;color:#333">2211005</div>
<div class="t" style="left:389.500px;top:12px;font-size:14.400px;color:#333">应付住房公积金</div>
<div class="t" style="left:774.300px;top:11.500px;font-size:14.400px;color:#333">贷</div>
</div>
<div class="abs" style="left:0;top:562.50px;width:1622.500px;height:37.500px">
<div class="abs" style="left:1412px;top:0;width:210.500px;height:37.500px;background:#f9f9f9"></div>
<div class="t n" style="left:17.8px;top:10px;font-size:15.300px;letter-spacing:-.12px;color:#333">2211006</div>
<div class="t" style="left:389.500px;top:12px;font-size:14.400px;color:#333">应付工会经费</div>
<div class="t" style="left:774.300px;top:11.500px;font-size:14.400px;color:#333">贷</div>
</div>
<div class="abs" style="left:0;top:37.25px;width:1622.500px;height:1px;background:#f0f0f0"></div>
<div class="abs" style="left:0;top:74.25px;width:1622.500px;height:1px;background:#f0f0f0"></div>
<div class="abs" style="left:0;top:112.25px;width:1622.500px;height:1px;background:#f0f0f0"></div>
<div class="abs" style="left:0;top:149.25px;width:1622.500px;height:1px;background:#f0f0f0"></div>
<div class="abs" style="left:0;top:187.25px;width:1622.500px;height:1px;background:#f0f0f0"></div>
<div class="abs" style="left:0;top:224.25px;width:1622.500px;height:1px;background:#f0f0f0"></div>
<div class="abs" style="left:0;top:262.25px;width:1622.500px;height:1px;background:#f0f0f0"></div>
<div class="abs" style="left:0;top:299.25px;width:1622.500px;height:1px;background:#f0f0f0"></div>
<div class="abs" style="left:0;top:337.25px;width:1622.500px;height:1px;background:#f0f0f0"></div>
<div class="abs" style="left:0;top:374.25px;width:1622.500px;height:1px;background:#f0f0f0"></div>
<div class="abs" style="left:0;top:412.25px;width:1622.500px;height:1px;background:#f0f0f0"></div>
<div class="abs" style="left:0;top:449.25px;width:1622.500px;height:1px;background:#f0f0f0"></div>
<div class="abs" style="left:0;top:487.25px;width:1622.500px;height:1px;background:#f0f0f0"></div>
<div class="abs" style="left:0;top:524.25px;width:1622.500px;height:1px;background:#f0f0f0"></div>
<div class="abs" style="left:0;top:562.25px;width:1622.500px;height:1px;background:#f0f0f0"></div>
<div class="abs" style="left:0;top:599.25px;width:1622.500px;height:1px;background:#f0f0f0"></div>
<div class="abs" style="left:383.25px;top:0;width:1px;height:600px;background:#f0f0f0"></div>
<div class="abs" style="left:751.25px;top:0;width:1px;height:600px;background:#f0f0f0"></div>
<div class="abs" style="left:811.25px;top:0;width:1px;height:600px;background:#f0f0f0"></div>
<div class="abs" style="left:989.25px;top:0;width:1px;height:600px;background:#f0f0f0"></div>
<div class="abs" style="left:1200.50px;top:0;width:1px;height:600px;background:#f0f0f0"></div>
<div class="abs" style="left:1411.00px;top:0;width:1px;height:600px;background:#f0f0f0"></div>
</div>
<div class="abs" style="left:1874.500px;top:557px;width:12px;height:24.500px;border-radius:6px;background:#b3b3b3"></div>
<div class="abs" style="left:1910.500px;top:116px;width:9.500px;height:751px;background:#f0f1f4"></div>
<div class="abs" style="left:1910.500px;top:116px;width:9.500px;height:743.500px;border-radius:5px;background:#b0b0b0"></div>
</body></html>
